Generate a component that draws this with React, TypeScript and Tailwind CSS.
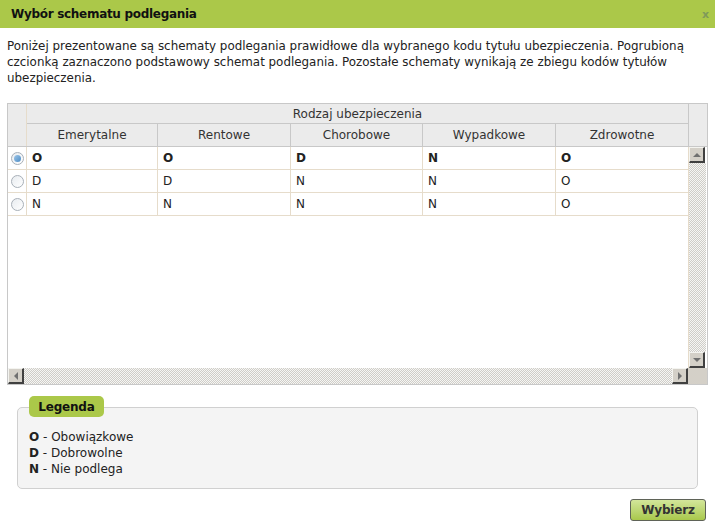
import React, { useState } from 'react';

const font = { fontFamily: '"DejaVu Sans", Verdana, sans-serif' };

const columns = ['Emerytalne', 'Rentowe', 'Chorobowe', 'Wypadkowe', 'Zdrowotne'];

const rows = [
  ['O', 'O', 'D', 'N', 'O'],
  ['D', 'D', 'N', 'N', 'O'],
  ['N', 'N', 'N', 'N', 'O'],
];

const checker =
  'bg-[repeating-conic-gradient(#cfcdc8_0%_25%,#f6f6f4_0%_50%)] bg-[length:2px_2px]';

function ScrollButton({ dir }: { dir: 'up' | 'down' | 'left' | 'right' }) {
  const tri =
    dir === 'up'
      ? 'border-x-[4px] border-x-transparent border-b-[4px] border-b-[#707070]'
      : dir === 'down'
        ? 'border-x-[4px] border-x-transparent border-t-[4px] border-t-[#707070]'
        : dir === 'left'
          ? 'border-y-[4px] border-y-transparent border-r-[4px] border-r-[#707070]'
          : 'border-y-[4px] border-y-transparent border-l-[4px] border-l-[#707070]';
  return (
    <div className="h-[16px] w-[16px] shrink-0 bg-[#d4d0c8] border-t border-l border-t-[#f4f4f0] border-l-[#f4f4f0] border-r-2 border-b-2 border-r-[#404040] border-b-[#404040] flex items-center justify-center">
      <div className={`w-0 h-0 ${tri}`} />
    </div>
  );
}

function Radio({ checked, onClick }: { checked: boolean; onClick: () => void }) {
  return (
    <button
      onClick={onClick}
      className="h-[13px] w-[13px] rounded-full border border-[#a8b0b8] bg-gradient-to-br from-[#e8ecf0] to-[#ffffff] flex items-center justify-center"
    >
      {checked && (
        <span className="h-[7px] w-[7px] rounded-full bg-gradient-to-br from-[#9cc6e8] to-[#4d8cc4]" />
      )}
    </button>
  );
}

export default function App() {
  const [selected, setSelected] = useState(0);

  return (
    <div className="w-[715px] h-[531px] bg-white text-[#222] relative overflow-hidden" style={font}>
      {/* Title bar */}
      <div className="h-[28px] bg-[#abc849] flex items-center justify-between pl-[11px] pr-[6px]">
        <span className="text-[12px] tracking-[-0.3px] font-bold text-[#111]">Wybór schematu podlegania</span>
        <span className="text-[11px] font-bold text-[#7f9a5a] leading-none">x</span>
      </div>

      {/* Intro */}
      <p className="px-[7px] pt-[10px] text-[11.9px] leading-[16px] text-[#222]">
        Poniżej prezentowane są schematy podlegania prawidłowe dla wybranego kodu tytułu ubezpieczenia. Pogrubioną
        czcionką zaznaczono podstawowy schemat podlegania. Pozostałe schematy wynikają ze zbiegu kodów tytułów
        ubezpieczenia.
      </p>

      {/* Grid */}
      <div className="ml-[7px] mt-[17px] w-[701px] border border-[#c8c8c8] bg-white">
        {/* Header */}
        <div className="flex bg-[#ebebeb] text-[12px] text-[#333]">
          <div className="w-[19px] shrink-0 border-r border-[#e6dccb]" />
          <div className="w-[661px] shrink-0">
            <div className="h-[20px] flex items-center justify-center border-b border-[#c8c8c8]">
              Rodzaj ubezpieczenia
            </div>
            <div className="grid grid-cols-[131px_133px_132px_133px_132px] h-[22px]">
              {columns.map((c, i) => (
                <div
                  key={c}
                  className={`flex items-center justify-center ${i < 4 ? 'border-r border-[#c8c8c8]' : ''}`}
                >
                  {c}
                </div>
              ))}
            </div>
          </div>
          <div className="flex-1 border-l border-[#c8c8c8]" />
        </div>

        {/* Body */}
        <div className="flex h-[222px] border-t border-[#c8c8c8]">
          <div className="w-[680px] shrink-0 text-[12px]">
            {rows.map((r, ri) => (
              <div key={ri} className="flex h-[23px] border-b border-[#e6dccb]">
                <div className="w-[19px] shrink-0 flex items-center justify-center border-r border-[#e6dccb]">
                  <Radio checked={selected === ri} onClick={() => setSelected(ri)} />
                </div>
                <div className="grid grid-cols-[131px_133px_132px_133px_132px] w-[661px]">
                  {r.map((v, ci) => (
                    <div
                      key={ci}
                      className={`flex items-center pl-[5px] ${ri === 0 ? 'font-bold' : ''} ${ci < 4 ? 'border-r border-[#e6dccb]' : ''}`}
                    >
                      {v}
                    </div>
                  ))}
                </div>
              </div>
            ))}
          </div>
          <div className="flex-1 border-l border-[#e6dccb] flex flex-col pr-[1px]">
            <ScrollButton dir="up" />
            <div className={`flex-1 ${checker}`} />
            <ScrollButton dir="down" />
          </div>
        </div>

        {/* Horizontal scrollbar */}
        <div className="flex h-[16px]">
          <div className={`w-[680px] shrink-0 flex justify-between ${checker}`}>
            <ScrollButton dir="left" />
            <ScrollButton dir="right" />
          </div>
          <div className="flex-1 bg-[#d4d0c8]" />
        </div>
      </div>

      {/* Legend */}
      <div className="relative mx-[17px] mt-[22px] h-[82px] rounded-[5px] border border-[#d0d0d0] bg-[#f4f4f4] pl-[11px] pt-[21px] text-[12px] leading-[16px]">
        <div className="absolute left-[11px] top-[-12px] h-[21px] w-[75px] rounded-[5px] bg-[#abc849] flex items-center justify-center text-[12px] tracking-[-0.2px] font-bold text-[#111]">
          Legenda
        </div>
        <div><b>O</b> - Obowiązkowe</div>
        <div><b>D</b> - Dobrowolne</div>
        <div><b>N</b> - Nie podlega</div>
      </div>

      {/* Footer */}
      <div className="flex justify-end pr-[9px] pt-[10px]">
        <button className="h-[22px] w-[76px] rounded-[3px] border border-[#5f6358] bg-gradient-to-b from-[#d3e69a] to-[#a9c84a] text-[12px] tracking-[-0.2px] font-bold text-[#333]">
          Wybierz
        </button>
      </div>
    </div>
  );
}
